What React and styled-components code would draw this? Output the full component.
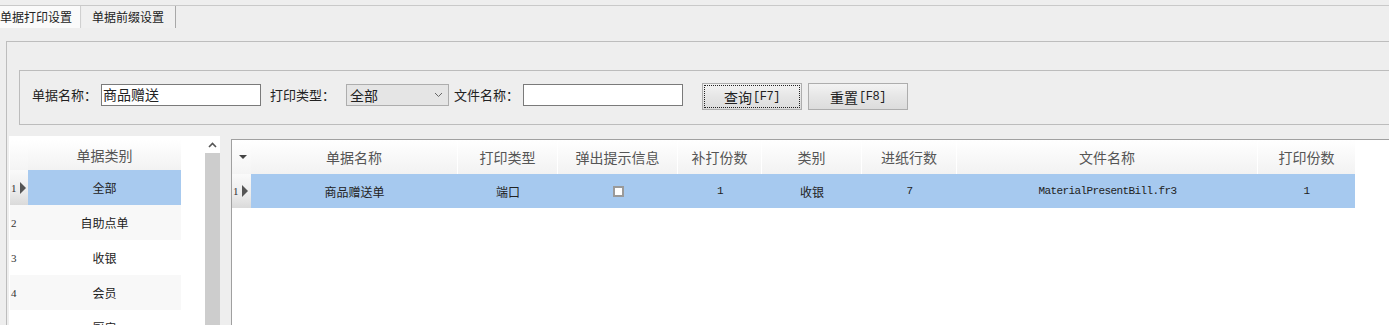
import React from "react";
import styled, { createGlobalStyle } from "styled-components";

const GlobalStyle = createGlobalStyle`
	html, body {
		margin: 0;
		padding: 0;
		background: #eeeeee;
		font-family: "Noto Sans CJK SC", "Noto Sans", sans-serif;
		color: #222;
	}
`;

const Page = styled.div`
	width: 1389px;
	height: 325px;
	overflow: hidden;
	background: #eeeeee;
`;

const TabStrip = styled.div`
	display: flex;
	margin-top: 5px;
	height: 22px;
	border-top: 1px solid #c9c9c9;
`;

const Tab = styled.div`
	height: 22px;
	line-height: 21px;
	font-size: 12px;
	padding: ${(p) => (p.$active ? "0 8px 0 0" : "0 11px 0 10px")};
	background: ${(p) => (p.$active ? "#fafafa" : "#f0f0f0")};
	border-right: 1px solid ${(p) => (p.$active ? "#d0d0d0" : "#a8a8a8")};
	margin-right: ${(p) => (p.$active ? "1px" : "0")};
	white-space: nowrap;
`;

const Frame = styled.div`
	margin: 13px 0 0 6px;
	border-top: 1px solid #bdbdbd;
	border-left: 1px solid #bdbdbd;
	padding: 28px 0 0 2px;
	height: 400px;
`;

const GroupBox = styled.div`
	margin-left: 10px;
	height: 53px;
	border: 1px solid #bcbcbc;
	border-right: none;
	display: flex;
	align-items: flex-start;
	padding-left: 12px;
`;

const Label = styled.span`
	font-size: 13px;
	line-height: 22px;
	margin-top: 13px;
	margin-left: ${(p) => p.$gap || 0}px;
	width: ${(p) => p.$w}px;
	white-space: nowrap;
`;

const TextInput = styled.div`
	box-sizing: border-box;
	width: ${(p) => p.$w}px;
	height: 22px;
	margin-top: 13px;
	border: 1px solid #7a7a7a;
	background: #fff;
	font-size: 14px;
	line-height: 19px;
	padding-left: 1px;
`;

const Select = styled.div`
	box-sizing: border-box;
	width: 103px;
	height: 22px;
	margin-top: 13px;
	border: 1px solid #adadad;
	background: #e5e5e5;
	font-size: 14px;
	line-height: 19px;
	padding-left: 3px;
	display: flex;
	justify-content: space-between;
	align-items: center;
`;

const Chevron = styled.svg`
	width: 9px;
	height: 6px;
	margin-right: 5px;
`;

const Button = styled.div`
	box-sizing: border-box;
	width: 100px;
	height: 27px;
	margin-top: 12px;
	margin-left: ${(p) => p.$gap}px;
	border: 1px solid #adadad;
	background: linear-gradient(#f3f3f3, #e6e6e6 50%, #dcdcdc);
	padding: 1px;
	font-size: 14px;
	display: flex;
`;

const ButtonFace = styled.div`
	flex: 1;
	border: 1px ${(p) => (p.$focus ? "dotted #222" : "solid transparent")};
	display: flex;
	align-items: center;
	justify-content: center;
	gap: 1px;
	line-height: 1;
`;

const Mono = styled.span`
	font-family: "Liberation Mono", monospace;
	font-size: ${(p) => p.$size || 11}px;
	letter-spacing: ${(p) => p.$ls ?? -0.6}px;
`;

const Lower = styled.div`
	display: flex;
	align-items: flex-start;
	margin-top: 11px;
`;

const CategoryPanel = styled.div`
	display: flex;
	height: 260px;
`;

const ListBox = styled.div`
	width: 195px;
	background: #fff;
	padding: 4px 0 0 1px;
`;

const ListRow = styled.div`
	display: flex;
	height: ${(p) => p.$h}px;
`;

const Indicator = styled.div`
	box-sizing: border-box;
	width: ${(p) => p.$w}px;
	display: flex;
	align-items: center;
	justify-content: ${(p) => (p.$header ? "center" : "flex-start")};
	padding-left: ${(p) => (p.$header ? 0 : 1)}px;
	background: ${(p) =>
		p.$current
			? "linear-gradient(#fafafa, #ececec 60%, #dadada)"
			: p.$header
			? "linear-gradient(#ffffff, #f4f4f4)"
			: p.$bg};
	font-family: "Liberation Serif", serif;
	font-size: 11px;
	color: #333;
	gap: 3px;
`;

const Cell = styled.div`
	box-sizing: border-box;
	width: ${(p) => p.$w}px;
	display: flex;
	align-items: center;
	justify-content: center;
	font-size: ${(p) => (p.$header ? 14 : 12)}px;
	color: ${(p) => (p.$header ? "#555" : "#222")};
	background: ${(p) =>
		p.$header ? "linear-gradient(#ffffff, #f2f2f2)" : p.$bg};
	border-right: ${(p) => (p.$sep ? "1px solid #ffffff" : "none")};
	white-space: nowrap;
`;

const Arrow = styled.span`
	width: 0;
	height: 0;
	border-top: 6px solid transparent;
	border-bottom: 6px solid transparent;
	border-left: 6px solid #555;
`;

const DownMark = styled.span`
	width: 0;
	height: 0;
	border-left: 4px solid transparent;
	border-right: 4px solid transparent;
	border-top: 4px solid #444;
	margin-left: 3px;
`;

const ScrollBar = styled.div`
	width: 15px;
	display: flex;
	flex-direction: column;
`;

const ScrollUp = styled.div`
	height: 17px;
	background: #fff;
	display: flex;
	align-items: center;
	justify-content: center;
`;

const ScrollTrack = styled.div`
	flex: 1;
	background: #cdcdcd;
`;

const Grid = styled.div`
	margin-left: 11px;
	margin-top: 3px;
	flex: 1;
	height: 260px;
	background: #fff;
	border-top: 1px solid #a0a0a0;
	border-left: 1px solid #a0a0a0;
`;

const CheckBox = styled.span`
	box-sizing: border-box;
	width: 11px;
	height: 11px;
	background: #fff;
	border: 2px solid #9a9a9a;
`;

const categories = ["全部", "自助点单", "收银", "会员", "厨房", "前台"];

const columns = [
	{ title: "单据名称", w: 207, value: "商品赠送单" },
	{ title: "打印类型", w: 100, value: "端口" },
	{ title: "弹出提示信息", w: 120, check: true },
	{ title: "补打份数", w: 84, value: "1", mono: true },
	{ title: "类别", w: 100, value: "收银" },
	{ title: "进纸行数", w: 95, value: "7", mono: true },
	{ title: "文件名称", w: 301, value: "MaterialPresentBill.fr3", mono: true },
	{ title: "打印份数", w: 97, value: "1", mono: true },
];

export default function App() {
	return (
		<Page>
			<GlobalStyle />
			<TabStrip>
				<Tab $active>单据打印设置</Tab>
				<Tab>单据前缀设置</Tab>
			</TabStrip>
			<Frame>
				<GroupBox>
					<Label $w={69}>单据名称：</Label>
					<TextInput $w={160}>商品赠送</TextInput>
					<Label $gap={9} $w={76}>打印类型：</Label>
					<Select>
						全部
						<Chevron viewBox="0 0 9 6">
							<path d="M1 1 L4.5 4.5 L8 1" fill="none" stroke="#666" strokeWidth="1" />
						</Chevron>
					</Select>
					<Label $gap={5} $w={69}>文件名称：</Label>
					<TextInput $w={160} />
					<Button $gap={19}>
						<ButtonFace $focus>
							查询<Mono $size={12} $ls={-0.5}>[F7]</Mono>
						</ButtonFace>
					</Button>
					<Button $gap={6}>
						<ButtonFace>
							重置<Mono $size={12} $ls={-0.5}>[F8]</Mono>
						</ButtonFace>
					</Button>
				</GroupBox>
				<Lower>
					<CategoryPanel>
						<ListBox>
							<ListRow $h={30}>
								<Indicator $w={18} $header />
								<Cell $w={153} $header>
									单据类别
								</Cell>
							</ListRow>
							{categories.map((name, i) => {
								const current = i === 0;
								const stripe = i % 2 === 1 ? "#f8f8f8" : "#ffffff";
								return (
									<ListRow key={name} $h={35}>
										<Indicator $w={18} $current={current} $bg={stripe}>
											{i + 1}
											{current && <Arrow />}
										</Indicator>
										<Cell $w={153} $bg={current ? "#a8caef" : stripe}>
											{name}
										</Cell>
									</ListRow>
								);
							})}
						</ListBox>
						<ScrollBar>
							<ScrollUp>
								<svg width="9" height="6" viewBox="0 0 9 6">
									<path d="M1 5 L4.5 1.5 L8 5" fill="none" stroke="#555" strokeWidth="1.6" />
								</svg>
							</ScrollUp>
							<ScrollTrack />
						</ScrollBar>
					</CategoryPanel>
					<Grid>
						<ListRow $h={34}>
							<Indicator $w={19} $header>
								<DownMark />
							</Indicator>
							{columns.map((c, i) => (
								<Cell key={c.title} $w={c.w} $header $sep={i < columns.length - 1}>
									{c.title}
								</Cell>
							))}
						</ListRow>
						<ListRow $h={34}>
							<Indicator $w={19} $current>
								1<Arrow />
							</Indicator>
							{columns.map((c) => (
								<Cell key={c.title} $w={c.w} $bg="#a6c9ef">
									{c.check ? <CheckBox /> : c.mono ? <Mono>{c.value}</Mono> : c.value}
								</Cell>
							))}
						</ListRow>
					</Grid>
				</Lower>
			</Frame>
		</Page>
	);
}
